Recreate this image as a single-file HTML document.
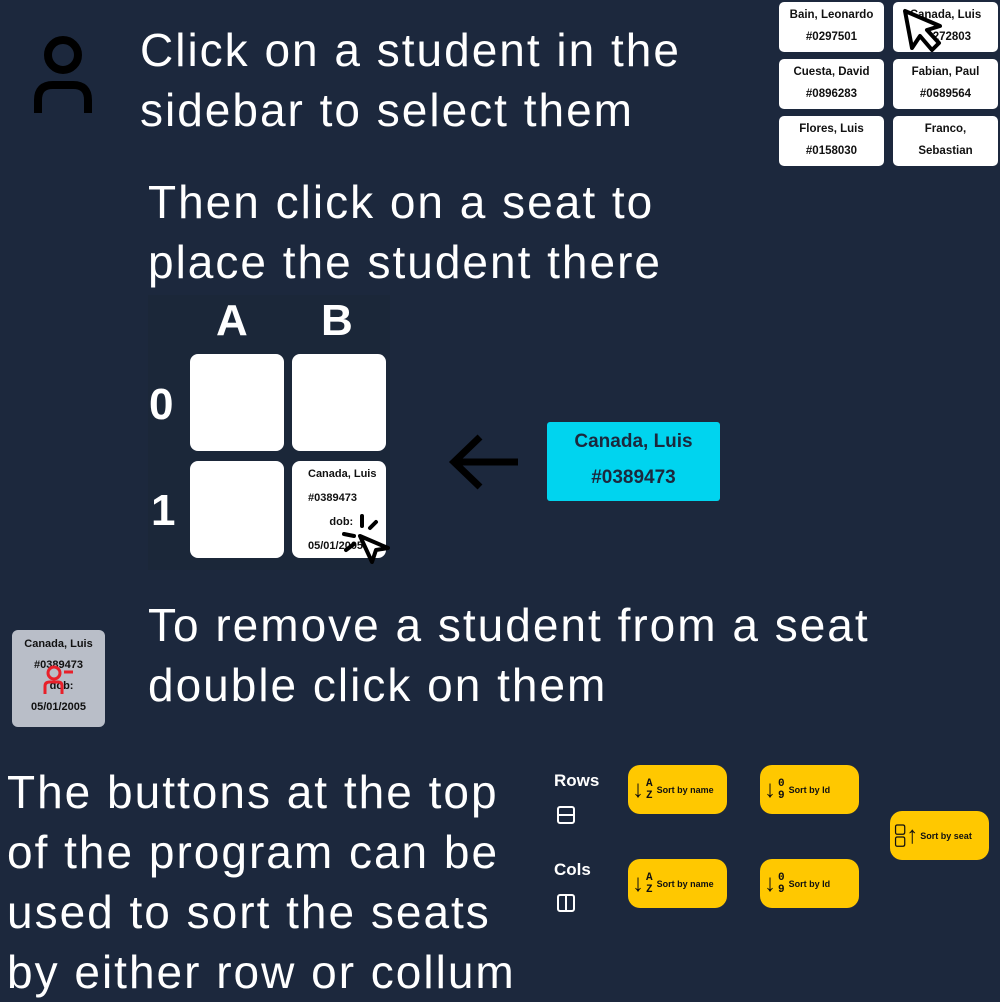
<!DOCTYPE html>
<html><head><style>
body{margin:0;width:1000px;height:1000px;background:#1c283d;position:relative;overflow:hidden;font-family:"Liberation Sans",sans-serif;color:#fff}
.a{position:absolute}
.big{font-size:46px;line-height:60px;white-space:nowrap;letter-spacing:2px}
.card{position:absolute;background:#fff;border-radius:5px;color:#111;font-weight:bold;font-size:11.5px;text-align:center;width:105px;height:50px;line-height:22px;padding-top:2px;box-sizing:border-box}
.seat{position:absolute;background:#fff;border-radius:8px;width:94px;height:97px}
.btn{position:absolute;background:#ffc800;border-radius:12px;color:#111;font-weight:bold;font-size:9px;width:99px;height:49px;display:flex;align-items:center;padding-left:4px;box-sizing:border-box}
.ic{font-size:24px;font-weight:bold;margin-right:2px}
.st{display:flex;flex-direction:column;font-size:11px;line-height:12px;margin-right:4px;font-family:"Liberation Mono",monospace}
</style></head><body>
<svg class="a" style="left:33px;top:35px" width="60" height="80" viewBox="0 0 60 80"><circle cx="30" cy="20" r="15" fill="none" stroke="#000" stroke-width="8"/><path d="M5 78 V65 Q5 50 20 50 H40 Q55 50 55 65 V78" fill="none" stroke="#000" stroke-width="8"/></svg>
<div class="a big" style="left:140px;top:20px">Click on a student in the<br>sidebar to select them</div>
<div class="card" style="left:779px;top:2px">Bain, Leonardo<br>#0297501</div>
<div class="card" style="left:893px;top:2px">Canada, Luis<br>#0272803</div>
<div class="card" style="left:779px;top:59px">Cuesta, David<br>#0896283</div>
<div class="card" style="left:893px;top:59px">Fabian, Paul<br>#0689564</div>
<div class="card" style="left:779px;top:116px">Flores, Luis<br>#0158030</div>
<div class="card" style="left:893px;top:116px">Franco,<br>Sebastian</div>
<svg class="a" style="left:900px;top:8px" width="45" height="45" viewBox="0 0 45 45"><path d="M5 3 L12 40 L20 28 L32 42 L39 35 L27 22 L40 18 Z" fill="#fff" stroke="#000" stroke-width="4" stroke-linejoin="round"/></svg>
<div class="a big" style="left:148px;top:172px">Then click on a seat to<br>place the student there</div>
<div class="a" style="left:148px;top:295px;width:242px;height:275px;background:#1b2739"></div>
<div class="a" style="left:216px;top:296px;font-size:44px;font-weight:bold">A</div>
<div class="a" style="left:321px;top:296px;font-size:44px;font-weight:bold">B</div>
<div class="a" style="left:149px;top:380px;font-size:44px;font-weight:bold">0</div>
<div class="a" style="left:151px;top:486px;font-size:44px;font-weight:bold">1</div>
<div class="seat" style="left:190px;top:354px"></div>
<div class="seat" style="left:292px;top:354px"></div>
<div class="seat" style="left:190px;top:461px"></div>
<div class="seat" style="left:292px;top:461px;color:#111;font-size:11px;font-weight:bold;line-height:24px;padding:1px 0 0 16px;box-sizing:border-box">Canada, Luis<br>#0389473<br>&nbsp;&nbsp;&nbsp;&nbsp;&nbsp;&nbsp;&nbsp;dob:<br>05/01/2005</div>
<svg class="a" style="left:338px;top:512px" width="52" height="52" viewBox="0 0 52 52"><path d="M24 4 V14 M38 10 L32 16 M6 22 L16 24 M8 38 L16 32" stroke="#000" stroke-width="4" stroke-linecap="round"/><path d="M22 24 L50 36 L38 38 L34 50 Z" fill="#fff" stroke="#000" stroke-width="4" stroke-linejoin="round"/></svg>
<svg class="a" style="left:448px;top:432px" width="74" height="60" viewBox="0 0 74 60"><path d="M70 30 H8 M32 5 L6 30 L32 55" fill="none" stroke="#000" stroke-width="7"/></svg>
<div class="a" style="left:547px;top:422px;width:173px;height:79px;background:#00d4ef;border-radius:3px;color:#1c283d;font-weight:bold;font-size:19px;text-align:center;line-height:36px;padding-top:2px;box-sizing:border-box">Canada, Luis<br>#0389473</div>
<div class="a" style="left:12px;top:630px;width:93px;height:97px;background:#b9bec8;border-radius:6px;color:#111;font-size:11px;font-weight:bold;line-height:21px;padding-top:4px;box-sizing:border-box;text-align:center">Canada, Luis<br>#0389473<br>&nbsp;&nbsp;dob:<br>05/01/2005</div>
<svg class="a" style="left:42px;top:664px" width="34" height="32" viewBox="0 0 34 32"><circle cx="12" cy="9" r="6" fill="none" stroke="#e8202a" stroke-width="3"/><path d="M3 30 V22 Q3 18 8 18 H16 Q20 18 20 22 V30 M22 8 H31" fill="none" stroke="#e8202a" stroke-width="3"/></svg>
<div class="a big" style="left:148px;top:595px">To remove a student from a seat<br>double click on them</div>
<div class="a big" style="left:7px;top:762px">The buttons at the top<br>of the program can be<br>used to sort the seats<br>by either row or collum</div>
<div class="a" style="left:554px;top:771px;font-weight:bold;font-size:17px">Rows</div>
<div class="a" style="left:557px;top:806px;width:18px;height:18px;border:2px solid #fff;border-radius:3px;box-sizing:border-box"><div style="border-top:2px solid #fff;margin-top:6px"></div></div>
<div class="a" style="left:554px;top:860px;font-weight:bold;font-size:17px">Cols</div>
<div class="a" style="left:557px;top:894px;width:18px;height:18px;border:2px solid #fff;border-radius:3px;box-sizing:border-box"><div style="border-left:2px solid #fff;margin-left:6px;height:14px"></div></div>
<div class="btn" style="left:628px;top:765px"><span class="ic">↓</span><span class="st"><b>A</b><b>Z</b></span>Sort by name</div>
<div class="btn" style="left:760px;top:765px"><span class="ic">↓</span><span class="st"><b>0</b><b>9</b></span>Sort by Id</div>
<div class="btn" style="left:628px;top:859px"><span class="ic">↓</span><span class="st"><b>A</b><b>Z</b></span>Sort by name</div>
<div class="btn" style="left:760px;top:859px"><span class="ic">↓</span><span class="st"><b>0</b><b>9</b></span>Sort by Id</div>
<div class="btn" style="left:890px;top:811px"><span class="st" style="margin-right:0;font-size:13px">▢<br>▢</span><span class="ic">↑</span>Sort by seat</div>
</body></html>
